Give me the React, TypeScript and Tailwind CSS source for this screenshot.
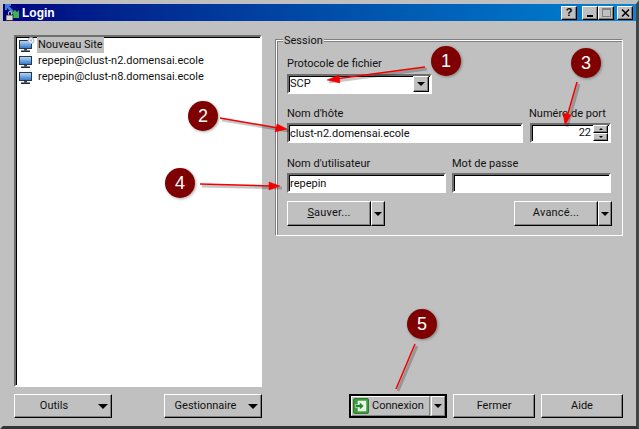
import React from "react";

const raised =
  "border border-t-white border-l-white border-r-black border-b-black shadow-[inset_-1px_-1px_0_#808080]";
const sunken =
  "border-2 border-t-[#6e6e6e] border-l-[#6e6e6e] border-r-white border-b-white bg-white shadow-[inset_1px_1px_0_#000]";

function Caret() {
  return <span className="block w-0 h-0 border-x-[4px] border-x-transparent border-t-[4px] border-t-black" />;
}

function WideCaret() {
  return <span className="block w-0 h-0 border-x-[5px] border-x-transparent border-t-[5px] border-t-black" />;
}

function Monitor({ gear }: { gear?: boolean }) {
  return (
    <svg width="17" height="16" viewBox="0 0 17 16" className="shrink-0">
      <defs>
        <linearGradient id="screen" x1="0" y1="0" x2="0" y2="1">
          <stop offset="0" stopColor="#bcdcf8" />
          <stop offset="1" stopColor="#2f74c8" />
        </linearGradient>
      </defs>
      <rect x="1.5" y="3.5" width="12" height="8" fill="url(#screen)" stroke="#26384f" />
      <rect x="6" y="12" width="3" height="1.5" fill="#3b4652" />
      <rect x="3" y="13.5" width="9" height="1.5" fill="#1d242c" />
      {gear && (
        <g>
          <circle cx="13" cy="3.5" r="3" fill="#eef0f6" stroke="#a4aec0" />
          <circle cx="13" cy="3.5" r="1" fill="#a4aec0" />
        </g>
      )}
    </svg>
  );
}

function SiteRow({ label, gear, active }: { label: string; gear?: boolean; active?: boolean }) {
  return (
    <div className="flex items-center h-[16px]">
      <Monitor gear={gear} />
      <span className={"ml-[2px] px-[1px] leading-[16px] " + (active ? "bg-[#c0c0c0]" : "")}>{label}</span>
    </div>
  );
}

function Field({ label, value, className }: { label: string; value?: string; className: string }) {
  return (
    <div className={"flex flex-col " + className}>
      <span className="h-[17px] leading-[15px]">{label}</span>
      <div className={sunken + " h-[20px] flex items-center pl-[1px] leading-none"}>{value}</div>
    </div>
  );
}

function SplitButton({ label, className }: { label: React.ReactNode; className: string }) {
  return (
    <div className={"flex h-[25px] " + className}>
      <div className={raised + " flex-1 flex items-center justify-center tracking-[0.2px]"}>{label}</div>
      <div className={raised + " w-[14px] flex items-center justify-center"}>
        <Caret />
      </div>
    </div>
  );
}

function TitleButton({ children, className }: { children: React.ReactNode; className?: string }) {
  return (
    <div className={raised + " w-[16px] h-[14px] bg-[#c0c0c0] flex items-center justify-center " + (className ?? "")}>
      {children}
    </div>
  );
}

function Badge({ n, className }: { n: number; className: string }) {
  return (
    <div
      className={
        "absolute w-[30px] h-[30px] rounded-full bg-[#7f0000] text-white text-[18px] leading-none flex items-center justify-center shadow-[1px_1px_3px_rgba(0,0,0,0.35)] font-['Liberation_Sans',sans-serif] " +
        className
      }
    >
      {n}
    </div>
  );
}

export default function App() {
  return (
    <div className="relative w-[639px] h-[429px] overflow-hidden bg-[#c0c0c0] text-[11px] text-[#111] font-['Roboto',sans-serif] border-[3px] border-t-[4px] border-[#c0c0c0] border-r-[#444] border-b-[#333] flex flex-col">
      {/* TITLE BAR */}
      <div className="h-[17px] shrink-0 flex items-center bg-gradient-to-r from-[#000080] to-[#1084d0]">
        <svg width="18" height="17" viewBox="0 0 18 17" className="shrink-0">
          <path d="M2 0h6v2H6l5 5-2 2-5-5v2H2z" fill="#3f7fd6" />
          <path d="M9 9l3-3 2 2 2-2v8H8l2-2z" fill="#3bb54a" />
          <path d="M5 9a2 2 0 0 1 4 0v2H8V9a1 1 0 0 0-2 0v2H5z" fill="#c8c8c8" />
          <rect x="3" y="11" width="7" height="5.5" fill="#d8d8d8" stroke="#222" strokeWidth="0.8" />
        </svg>
        <span className="ml-[1px] text-white font-bold text-[12px] font-['Liberation_Sans',sans-serif]">Login</span>
        <div className="ml-auto flex mr-[3px]">
          <TitleButton className="mr-[5px]">
            <span className="text-[11px] leading-none font-bold text-black font-['Liberation_Sans',sans-serif]">?</span>
          </TitleButton>
          <TitleButton>
            <span className="block w-[6px] h-[2px] bg-black mt-[6px]" />
          </TitleButton>
          <TitleButton className="mr-[3px]">
            <span className="block w-[9px] h-[9px] border border-[#808080] border-t-2" />
          </TitleButton>
          <TitleButton>
            <svg width="9" height="8" viewBox="0 0 9 8">
              <path d="M1 0.5l7 7M8 0.5l-7 7" stroke="#000" strokeWidth="1.5" />
            </svg>
          </TitleButton>
        </div>
      </div>

      {/* BODY */}
      <div className="flex-1 flex pl-[11px] pr-[13px] pt-[14px] pb-[8px]">
        {/* SITES */}
        <div className="w-[249px] flex flex-col">
          <div className={sunken + " flex-1 pl-[2px] flex flex-col"}>
            <SiteRow label="Nouveau Site" gear active />
            <SiteRow label="repepin@clust-n2.domensai.ecole" />
            <SiteRow label="repepin@clust-n8.domensai.ecole" />
          </div>
          <div className="mt-[7px] flex justify-between">
            <div className={raised + " w-[98px] h-[24px] flex items-center relative"}>
              <span className="flex-1 text-center pr-[5px]">Outils</span>
              <span className="mr-[3px]">
                <WideCaret />
              </span>
            </div>
            <div className={raised + " w-[98px] h-[24px] flex items-center"}>
              <span className="flex-1 text-center pr-[2px]">Gestionnaire</span>
              <span className="mr-[3px]">
                <WideCaret />
              </span>
            </div>
          </div>
        </div>

        {/* SESSION + ACTIONS */}
        <div className="ml-[14px] flex-1 flex flex-col">
          <div className="relative mt-[5px] h-[196px] border border-white shadow-[inset_1px_1px_0_#808080,-1px_-1px_0_#808080] px-[10px] pt-[15px] flex flex-col">
            <span className="absolute left-[6px] top-[-7px] px-[1px] bg-[#c0c0c0] leading-[14px]">Session</span>
            <span className="h-[18px] leading-[15px]">Protocole de fichier</span>
            <div className={sunken + " w-[145px] h-[20px] flex items-center pl-[1px] pr-[1px]"}>
              <span className="flex-1">SCP</span>
              <div className={raised + " w-[16px] h-[16px] bg-[#c0c0c0] flex items-center justify-center"}>
                <Caret />
              </div>
            </div>
            <div className="flex mt-[12px]">
              <Field label="Nom d'hôte" value="clust-n2.domensai.ecole" className="w-[236px]" />
              <div className="ml-[7px] flex flex-col w-[81px]">
                <span className="h-[17px] leading-[15px] -ml-[1px] whitespace-nowrap">Numéro de port</span>
                <div className={sunken + " h-[20px] flex items-center justify-end pr-[1px]"}>
                  <span className="mr-[2px]">22</span>
                  <div className="w-[15px] h-[16px] flex flex-col">
                    <div className={raised + " h-[8px] bg-[#c0c0c0] flex items-center justify-center"}>
                      <span className="block w-0 h-0 border-x-[2px] border-x-transparent border-b-[2px] border-b-black" />
                    </div>
                    <div className={raised + " h-[8px] bg-[#c0c0c0] flex items-center justify-center"}>
                      <span className="block w-0 h-0 border-x-[2px] border-x-transparent border-t-[2px] border-t-black" />
                    </div>
                  </div>
                </div>
              </div>
            </div>
            <div className="flex mt-[13px]">
              <Field label="Nom d'utilisateur" value="repepin" className="w-[159px]" />
              <Field label="Mot de passe" className="ml-[6px] w-[159px]" />
            </div>
            <div className="flex justify-between mt-[8px]">
              <SplitButton
                className="w-[98px]"
                label={
                  <span>
                    <span className="underline">S</span>auver...
                  </span>
                }
              />
              <SplitButton className="w-[98px]" label="Avancé..." />
            </div>
          </div>

          {/* ACTIONS */}
          <div className="mt-auto flex pl-[73px] h-[24px]">
            <div className="w-[98px] border-[2px] border-black flex">
              <div className="flex-1 flex items-center border border-t-white border-l-white border-r-[#808080] border-b-[#808080] pl-[1px]">
                <svg width="16" height="16" viewBox="0 0 16 16" className="shrink-0">
                  <rect x="0.5" y="0.5" width="15" height="15" rx="1.5" fill="#3d9a3d" stroke="#2a7f2a" />
                  <rect x="5" y="3" width="8" height="10" fill="#eaf6ea" stroke="#fff" strokeWidth="0.5" />
                  <path d="M2.5 6.5h4V4l4.5 4-4.5 4V9.5h-4z" fill="#1f8a2a" stroke="#fff" strokeWidth="0.5" />
                </svg>
                <span className="ml-[3px]">Connexion</span>
              </div>
              <div className="w-[14px] ml-[1px] flex items-center justify-center border border-t-white border-l-white border-r-[#808080] border-b-[#808080]">
                <Caret />
              </div>
            </div>
            <div className={raised + " ml-[6px] w-[82px] flex items-center justify-center"}>Fermer</div>
            <div className={raised + " ml-[6px] w-[82px] flex items-center justify-center"}>Aide</div>
          </div>
        </div>
      </div>

      {/* ANNOTATIONS */}
      <svg width="639" height="429" viewBox="0 0 639 429" className="absolute left-[-3px] top-[-4px] pointer-events-none">
        <g stroke="#000" strokeOpacity="0.22" strokeWidth="3" fill="none" transform="translate(2 2)">
          <path d="M425 67L327 80M220 118L287 129M577 82L565 125M200 184L280 186M415 344L396 389" />
        </g>
        <g stroke="#f00000" strokeWidth="1.5" fill="#f00000">
          <path d="M425 67L335 79" />
          <path d="M327 80L339 75L340 83z" strokeWidth="0.5" />
          <path d="M220 118L278 128" />
          <path d="M287 129L275 132L277 124z" strokeWidth="0.5" />
          <path d="M577 82L567 117" />
          <path d="M565 125L563 113L571 115z" strokeWidth="0.5" />
          <path d="M200 184L271 186" />
          <path d="M280 186L269 190L269 182z" strokeWidth="0.5" />
          <path d="M415 344L396 389" />
        </g>
      </svg>
      <Badge n={1} className="left-[428px] top-[42px]" />
      <Badge n={2} className="left-[185px] top-[97px]" />
      <Badge n={3} className="left-[568px] top-[44px]" />
      <Badge n={4} className="left-[162px] top-[164px]" />
      <Badge n={5} className="left-[404px] top-[305px]" />
    </div>
  );
}
